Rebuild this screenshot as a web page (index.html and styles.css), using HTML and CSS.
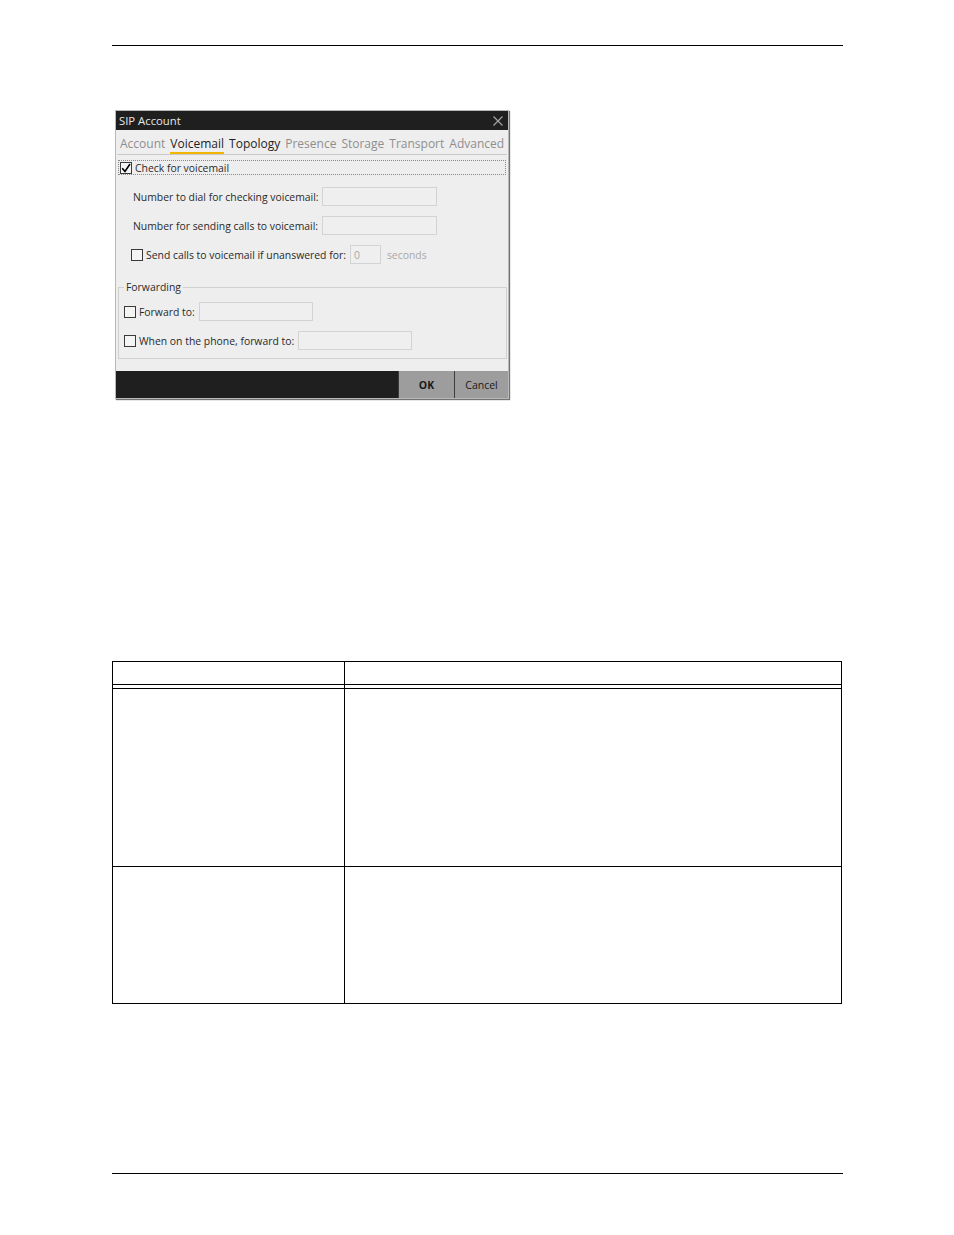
FILE: index.html
```html
<!DOCTYPE html>
<html>
<head>
<meta charset="utf-8">
<link rel="stylesheet" href="styles.css">
</head>
<body>
<div class="page">
  <div class="rule"></div>

  <div class="dialog">
    <div class="titlebar">
      <span class="title">SIP Account</span>
      <svg class="close" width="10" height="10" viewBox="0 0 10 10"><path d="M0.5 0.5 L9.5 9.5 M9.5 0.5 L0.5 9.5" stroke="#a8a8a8" stroke-width="1.1" fill="none"/></svg>
    </div>
    <div class="tabs">
      <span class="tab">Account</span>
      <span class="tab active">Voicemail</span>
      <span class="tab dark">Topology</span>
      <span class="tab">Presence</span>
      <span class="tab">Storage</span>
      <span class="tab">Transport</span>
      <span class="tab">Advanced</span>
    </div>
    <div class="content">
      <div class="checkrow focus">
        <span class="cb checked"><svg width="10" height="10" viewBox="0 0 10 10"><path d="M1.2 5.2 L4 8.4 L9 1" stroke="#000" stroke-width="1.6" fill="none"/></svg></span>
        <span class="lbl">Check for voicemail</span>
      </div>
      <div class="field grid">
        <span class="lbl">Number to dial for checking voicemail:</span>
        <span class="inp w114"></span>
      </div>
      <div class="field grid">
        <span class="lbl">Number for sending calls to voicemail:</span>
        <span class="inp w114"></span>
      </div>
      <div class="field inline">
        <span class="cb"></span>
        <span class="lbl">Send calls to voicemail if unanswered for:</span>
        <span class="inp w30"><span class="val">0</span></span>
        <span class="lbl muted">seconds</span>
      </div>
      <fieldset class="group">
        <legend>Forwarding</legend>
        <div class="grow">
          <span class="cb"></span>
          <span class="lbl">Forward to:</span>
          <span class="inp w113"></span>
        </div>
        <div class="grow">
          <span class="cb"></span>
          <span class="lbl">When on the phone, forward to:</span>
          <span class="inp w113"></span>
        </div>
      </fieldset>
    </div>
    <div class="footer">
      <span class="btn ok">OK</span>
      <span class="btn cancel">Cancel</span>
    </div>
  </div>

  <div class="table">
    <div class="trow head"><div class="c1"></div><div class="c2"></div></div>
    <div class="trow gap"><div class="c1"></div><div class="c2"></div></div>
    <div class="trow r1"><div class="c1"></div><div class="c2"></div></div>
    <div class="trow r2"><div class="c1"></div><div class="c2"></div></div>
  </div>

  <div class="rule bottom"></div>
</div>
</body>
</html>
```

FILE: styles.css
```css
html, body {
  margin: 0;
  padding: 0;
  background: #fff;
}
body {
  font-family: "Open Sans", "Noto Sans", sans-serif;
}
.page {
  width: 731px;
  margin-left: 112px;
  padding-top: 45px;
}
.rule {
  height: 1px;
  background: #000;
}
.rule.bottom {
  margin-top: 169px;
}

/* dialog */
.dialog {
  margin: 64px 0 0 3px;
  width: 392px;
  border: 1px solid #b9b9b9;
  box-shadow: 1px 1px 1px rgba(0,0,0,0.55);
  background: #eeeeee;
  color: #2a2a2a;
}
.titlebar {
  height: 19px;
  background: #1f1f1f;
  display: flex;
  align-items: center;
  justify-content: space-between;
  padding: 0 5px 0 3px;
}
.title {
  color: #e6e6e6;
  font-size: 11.3px;
}
.close {
  display: block;
}
.tabs {
  height: 24px;
  border-bottom: 1px solid #c9c9c9;
  display: flex;
  align-items: flex-end;
  gap: 5px;
  padding: 0 0 0 3px;
  margin: 0 1px;
}
.tab {
  font-size: 12px;
  color: #8e8e8e;
  line-height: 17px;
  border-bottom: 2px solid transparent;
}
.tab.active {
  color: #1e1e1e;
  border-bottom-color: #f2b705;
}
.tab.dark {
  color: #1e1e1e;
}
.content {
  height: 216px;
  padding: 5px 2px 0 2px;
  box-sizing: border-box;
  font-size: 10.4px;
}
.lbl {
  white-space: nowrap;
}
.muted {
  color: #a9a9a9;
}
.cb {
  width: 10px;
  height: 10px;
  border: 1px solid #3a3a3a;
  background: #f4f4f4;
  display: inline-flex;
  align-items: center;
  justify-content: center;
  flex: none;
}
.checkrow {
  height: 15px;
  display: flex;
  align-items: center;
  gap: 3px;
  padding-left: 1px;
  box-sizing: border-box;
  border: 1px dotted #8a8a8a;
}
.field {
  margin-top: 10px;
  height: 19px;
  display: flex;
  align-items: center;
  padding-left: 15px;
}
.field.grid {
  display: grid;
  grid-template-columns: 189px auto;
  justify-content: start;
}
.checkrow + .field {
  margin-top: 12px;
}
.field.inline {
  gap: 3px;
  padding-left: 13px;
}
.field.inline .inp {
  margin-left: 1px;
}
.field.inline .muted {
  margin-left: 3px;
}
.inp {
  height: 19px;
  box-sizing: border-box;
  border: 1px solid #d3d3d3;
  background: #efefef;
  display: flex;
  align-items: center;
  flex: none;
}
.w114 { width: 115px; }
.w113 { width: 114px; }
.w30 { width: 31px; }
.val {
  color: #aaa;
  padding-left: 3px;
}
.group {
  margin: 17px 0 0 0;
  padding: 8px 5px 8px 5px;
  border: 1px solid #d0d0d0;
  width: 389px;
  box-sizing: border-box;
}
.group legend {
  padding: 0 2px;
  margin-left: 0;
  font-size: 10.4px;
  line-height: 13px;
}
.grow {
  height: 19px;
  display: flex;
  align-items: center;
  gap: 3px;
}
.grow + .grow {
  margin-top: 10px;
}
.grow .inp {
  margin-left: 1px;
}
.footer {
  height: 27px;
  background: #1f1f1f;
  display: flex;
  justify-content: flex-end;
}
.btn {
  background: #9d9d9d;
  border-left: 1px solid #3c3c3c;
  display: flex;
  align-items: center;
  justify-content: center;
  font-size: 10.5px;
  color: #1a1a1a;
}
.btn.ok {
  width: 55px;
  font-weight: 700;
}
.btn.cancel {
  width: 53px;
}

/* table */
.table {
  margin-top: 262px;
  width: 730px;
  border: 1px solid #000;
  box-sizing: border-box;
}
.trow {
  display: grid;
  grid-template-columns: 231px 1fr;
}
.trow .c2 {
  border-left: 1px solid #000;
}
.head { height: 23px; border-bottom: 1px solid #000; box-sizing: border-box; }
.gap { height: 4px; border-bottom: 1px solid #000; box-sizing: border-box; }
.r1 { height: 178px; border-bottom: 1px solid #000; box-sizing: border-box; }
.r2 { height: 136px; }
```
